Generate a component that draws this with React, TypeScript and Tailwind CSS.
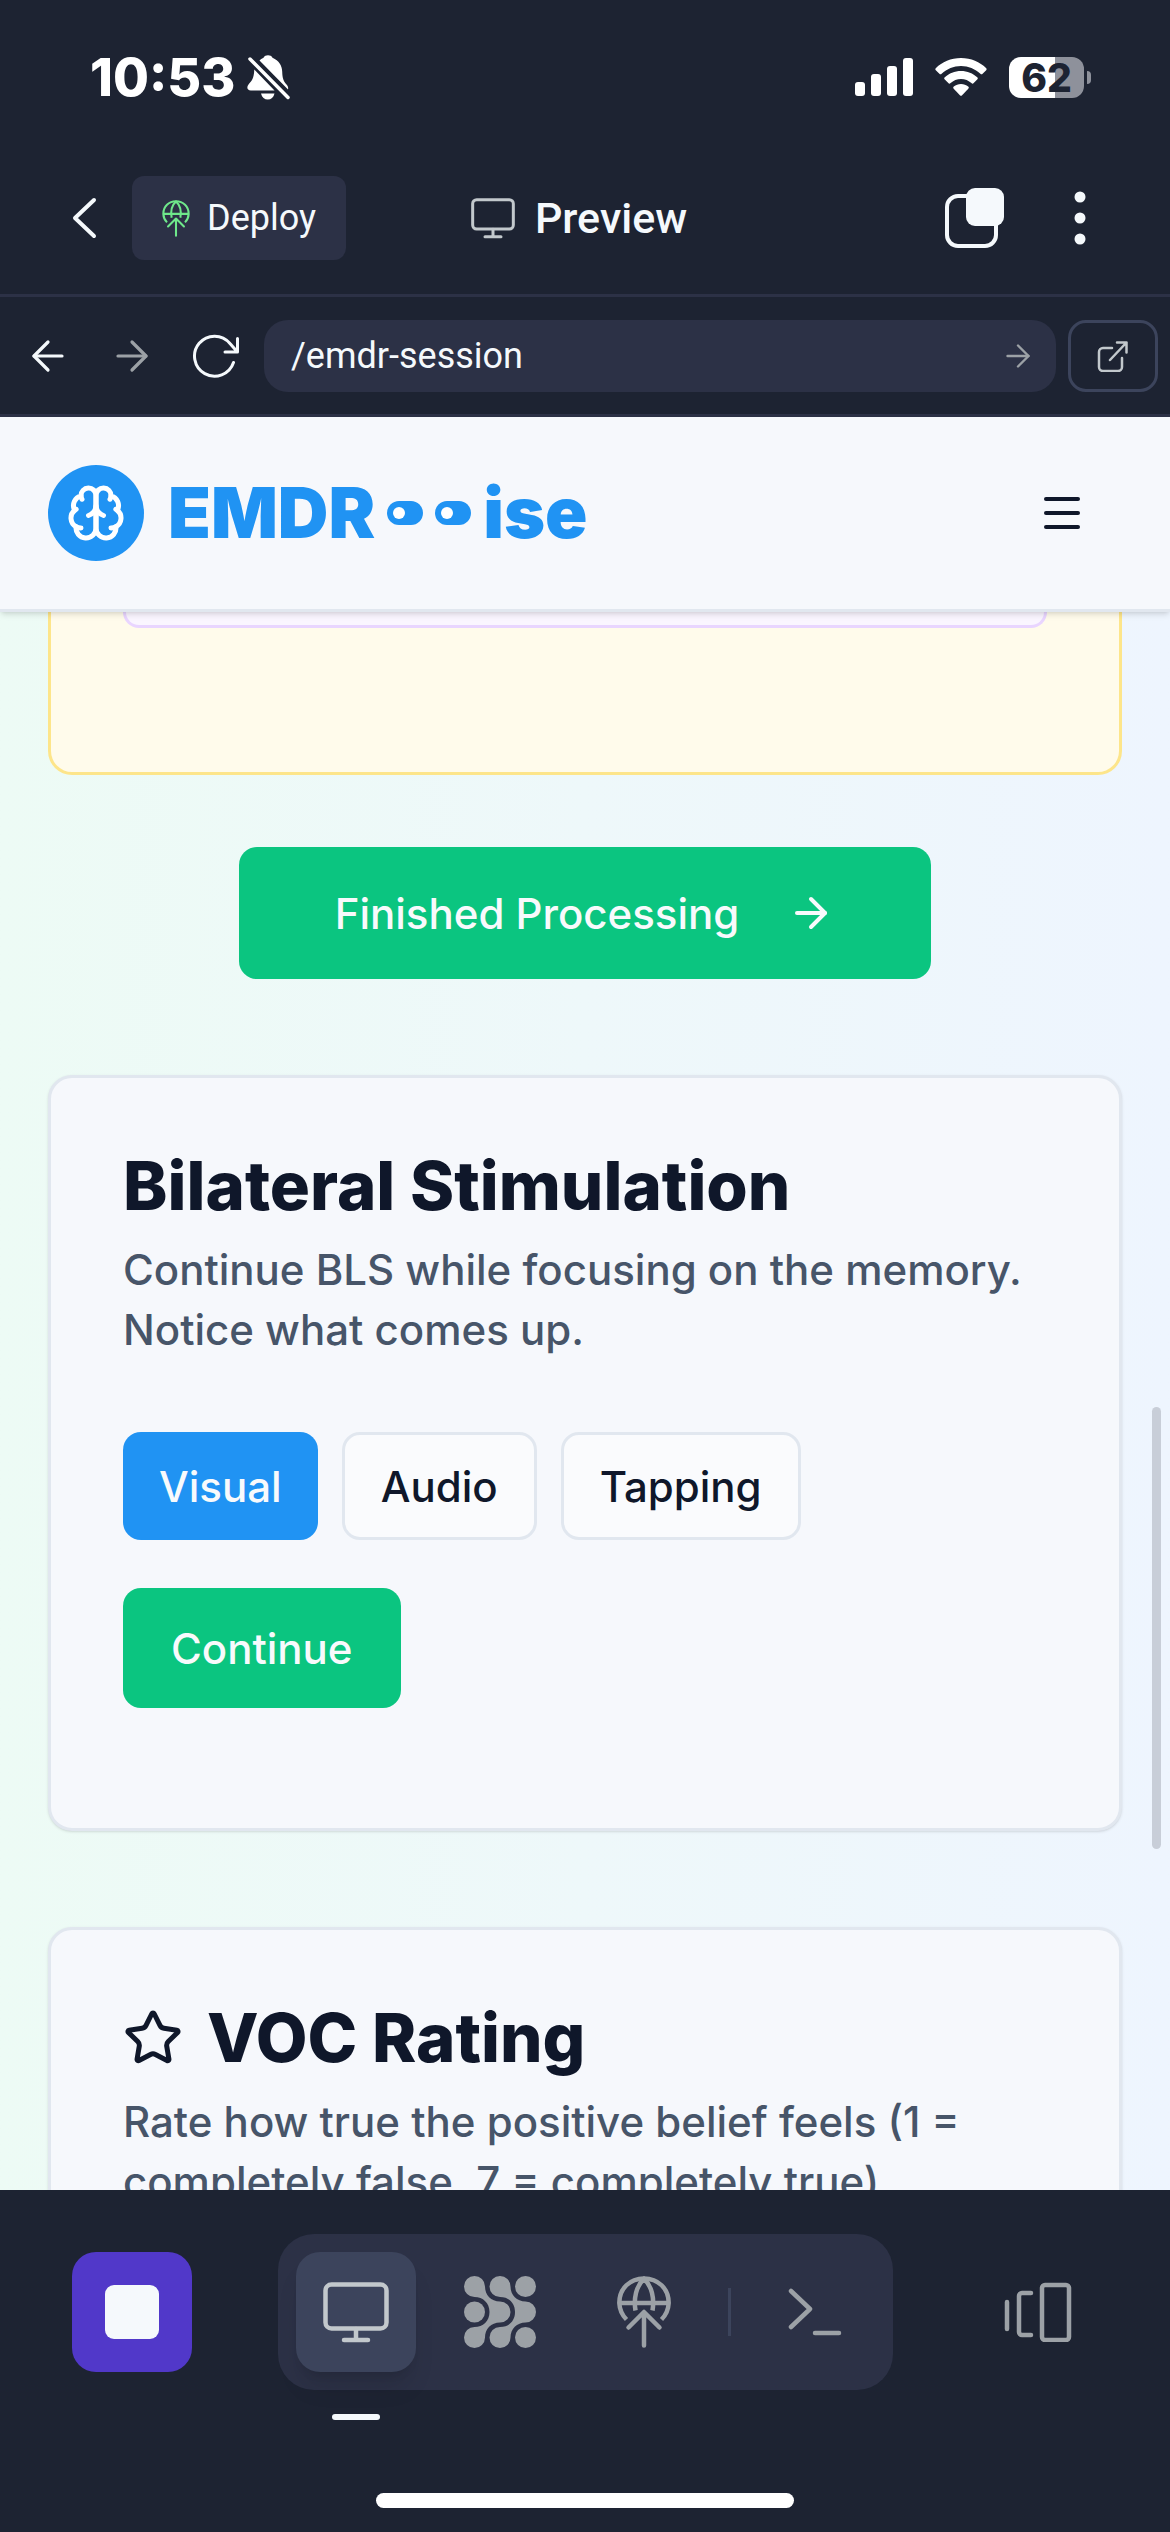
import React from "react";
import { ArrowRight, ArrowLeft, Menu, Star } from "lucide-react";

const StatusBar = () => (
  <div className="flex h-[150px] shrink-0 items-start justify-between pt-12 pr-[79px] pl-[90px] text-white">
    <div className="flex items-center gap-3">
      <span className="text-[52px] leading-[60px] font-extrabold">10:53</span>
      <svg width="44" height="46" viewBox="0 0 44 46" fill="currentColor" aria-label="Silent mode">
        <path d="M12.500 5.500C14 4 15.500 3.400 16.500 2.700 17.500 1 19 .3 21 .3s3.500.7 4.500 2.400C32 5.500 35 10.500 35.200 16.500c.2 7 1.300 9.500 4.300 13 1.500 1.700 2 3.400 1.500 5z" />
        <path d="M7.300 14.500L27.500 35.500H3.800C.3 35.500-.7 32.500 1.500 29.500c3.500-4 5.300-5.500 5.800-15zM14 38.500h13.500c-1 4-3.400 6-6.700 6S15 42.500 14 38.500z" />
        <path d="M3 4L41 42.500" stroke="currentColor" strokeWidth="3.500" strokeLinecap="round" />
      </svg>
    </div>
    <div className="flex h-[58px] items-center">
      <svg width="58" height="38" viewBox="0 0 58 38" fill="currentColor" aria-label="Signal">
        <rect x="0" y="24" width="10" height="14" rx="3" />
        <rect x="16" y="16" width="10" height="22" rx="3" />
        <rect x="32" y="8" width="10" height="30" rx="3" />
        <rect x="48" y="0" width="10" height="38" rx="3" />
      </svg>
      <svg className="ml-[22px]" width="52" height="38" viewBox="0 0 52 38" fill="currentColor" aria-label="Wi-Fi">
        <path d="M26 0C36 0 45 4 51 10c.8.800.8 1.500.2 2.200l-3.600 3.600c-.7.700-1.500.7-2.200 0C40 11 33.500 8 26 8S12 11 6.600 15.800c-.7.700-1.500.7-2.200 0L.8 12.200c-.7-.7-.6-1.400.2-2.200C7 4 16 0 26 0z" />
        <path d="M26 13c6.300 0 12 2.400 16.200 6.300.8.800.8 1.500 0 2.300l-3.500 3.500c-.7.700-1.500.7-2.300 0C33.700 22.600 30 21 26 21s-7.700 1.600-10.400 4.100c-.8.700-1.600.7-2.300 0l-3.500-3.500c-.8-.8-.8-1.500 0-2.300C14 15.400 19.700 13 26 13z" />
        <path d="M26 26c2.700 0 5.200.9 7.200 2.500.8.700.8 1.400.1 2.200l-6.200 6.500c-.7.700-1.500.7-2.200 0l-6.200-6.500c-.7-.8-.7-1.500.1-2.200C20.800 26.900 23.300 26 26 26z" />
      </svg>
      <div className="ml-[22px] flex h-[41px] w-[75px] items-center justify-center rounded-[12px] bg-linear-to-r from-white from-62% to-[#8e919b] to-62% text-[39px] leading-[41px] font-extrabold text-[#1d2332]">62</div>
      <div className="ml-[3px] h-[13px] w-1 rounded-r-full bg-[#8e919b]" />
    </div>
  </div>
);

const GlobeUp = ({ className, strokeWidth }: { className: string; strokeWidth: number }) => (
  <svg className={className} viewBox="0 0 54 72" fill="none" stroke="currentColor" strokeWidth={strokeWidth} strokeLinecap="butt">
    <path d="M9.500 43.500A25 25 0 0 1 2.300 27C2.300 12.500 13 2.400 27 2.400S51.700 12.500 51.700 27a25 25 0 0 1-7.200 16.500" />
    <path d="M3 27h48M18.500 34.500C16.500 23 19 10 27 3c8 7 10.500 20 8.500 31.500" />
    <path d="M11.500 51.500L27 36l15.500 15.500M27 37v32.500" strokeLinecap="round" strokeLinejoin="round" />
  </svg>
);

const Monitor = ({ className }: { className: string }) => (
  <svg className={className} viewBox="0 0 66 62" fill="none" stroke="currentColor" strokeWidth="4.500" strokeLinecap="round">
    <rect x="2.500" y="3.500" width="61" height="44" rx="6" />
    <path d="M33 48v11M21 59h24" />
  </svg>
);

const TitleBar = () => (
  <header className="grid h-[147px] shrink-0 grid-cols-[1fr_auto_1fr] items-center border-b-[3px] border-[#2c3146] pr-[78px] pb-2 pl-[66px] text-[#f5f9fc]">
    <div className="flex items-center gap-[30px]">
      <button aria-label="Back" className="flex w-9 justify-center">
        <svg width="26" height="44" viewBox="0 0 26 44" fill="none" stroke="currentColor" strokeWidth="4" strokeLinecap="round" strokeLinejoin="round">
          <path d="M23 4L4 22l19 18" />
        </svg>
      </button>
      <button className="flex h-[84px] items-center gap-[17px] rounded-[12px] bg-[#2c3146] px-[30px] font-[Roboto] text-[36px]">
        <GlobeUp className="h-[37px] w-7 text-[#6fe88b]" strokeWidth={4} />
        Deploy
      </button>
    </div>
    <h1 className="flex items-center gap-5 font-[Roboto] text-[43px] font-medium">
      <Monitor className="h-[42px] w-11 text-[#c2c8cc]" />
      Preview
    </h1>
    <div className="flex items-center justify-end gap-[63px]">
      <button aria-label="Open tabs">
        <svg width="60" height="60" viewBox="0 0 60 60" fill="none">
          <rect x="2" y="8" width="49" height="50" rx="11" stroke="currentColor" strokeWidth="4" />
          <rect x="21" y="0" width="38" height="38" rx="9" fill="currentColor" />
        </svg>
      </button>
      <button aria-label="More">
        <svg width="24" height="56" viewBox="0 0 24 56" fill="currentColor">
          <circle cx="12" cy="7" r="5.500" />
          <circle cx="12" cy="28" r="5.500" />
          <circle cx="12" cy="49" r="5.500" />
        </svg>
      </button>
    </div>
  </header>
);

const AddressBar = () => (
  <nav className="flex h-[120px] shrink-0 items-center border-b-[3px] border-[#2c3146] pr-3 pl-6 text-[#f5f9fc]">
    <button aria-label="Go back"><ArrowLeft size={48} strokeWidth={1.6} /></button>
    <button aria-label="Go forward" className="ml-9 text-[#9ca1a6]"><ArrowRight size={48} strokeWidth={1.6} /></button>
    <button aria-label="Reload" className="ml-9">
      <svg width="48" height="48" viewBox="0 0 48 48" fill="none" stroke="currentColor" strokeWidth="3" strokeLinecap="round" strokeLinejoin="round">
        <path d="M41.500 30.500A20 20 0 1 1 38 11.500l7 8M45.500 6.500v13.500H33" />
      </svg>
    </button>
    <form className="ml-6 flex h-[72px] min-w-0 flex-1 items-center rounded-[24px] bg-[#2c3146] pr-5 pl-[27px]">
      <input aria-label="Address" defaultValue="/emdr-session" className="min-w-0 flex-1 bg-transparent font-[Roboto] text-[36px] outline-none" />
      <button type="button" aria-label="Go" className="text-[#9ca1a6]"><ArrowRight size={36} strokeWidth={1.600} /></button>
    </form>
    <button aria-label="Open in new window" className="ml-3 flex h-[72px] w-[90px] items-center justify-center rounded-[18px] border-[3px] border-[#3c445c] text-[#c2c8cc]">
      <svg width="32" height="32" viewBox="0 0 32 32" fill="none" stroke="currentColor" strokeWidth="2.500" strokeLinecap="round" strokeLinejoin="round">
        <path d="M15 8H6a4 4 0 0 0-4 4v15a4 4 0 0 0 4 4h15a4 4 0 0 0 4-4V18M13 20L29.500 2.500M20 2.500h9.500v10" />
      </svg>
    </button>
  </nav>
);

const Brain = () => (
  <svg width="60" height="60" viewBox="0 0 24 24" fill="none" stroke="white" strokeWidth="2" strokeLinecap="round" strokeLinejoin="round">
    <path d="M12 5a3 3 0 1 0-5.997.125 4 4 0 0 0-2.526 5.770 4 4 0 0 0 .556 6.588A4 4 0 1 0 12 18Z" />
    <path d="M12 5a3 3 0 1 1 5.997.125 4 4 0 0 1 2.526 5.770 4 4 0 0 1-.556 6.588A4 4 0 1 1 12 18Z" />
    <path d="M15 13a4.500 4.500 0 0 1-3-4 4.500 4.500 0 0 1-3 4" />
    <path d="M17.599 6.500a3 3 0 0 0 .399-1.375M6.003 5.125A3 3 0 0 0 6.401 6.500M3.477 10.896a4 4 0 0 1 .585-.396M19.938 10.500a4 4 0 0 1 .585.396M6 18a4 4 0 0 1-1.967-.516M19.967 17.484A4 4 0 0 1 18 18" />
  </svg>
);

const Eye = () => (
  <span className="flex h-6 w-9 items-center rounded-full bg-[#2093f3] pl-1.5">
    <span className="size-3 rounded-full bg-white" />
  </span>
);

const AppHeader = () => (
  <header className="relative z-10 flex h-[195px] shrink-0 items-center justify-between border-b-[3px] border-[#e1e7ef] bg-[#f6f8fc] pr-[84px] pl-12 shadow-md">
    <a href="#home" className="flex items-center gap-6 text-[#2093f3]">
      <span className="flex size-24 items-center justify-center rounded-full bg-[#2093f3]"><Brain /></span>
      <span className="flex items-center text-[70px] leading-[96px] font-black">
        EMDR
        <span className="mx-3 flex gap-3"><Eye /><Eye /></span>
        ise
      </span>
    </a>
    <button aria-label="Menu" className="text-[#0f172a]"><Menu size={48} /></button>
  </header>
);

const card = "rounded-[24px] border-[3px] border-[#e1e7ef] bg-[#f6f8fc] px-[72px] pt-[72px] shadow-sm";
const title = "text-[67px] leading-[72px] font-extrabold text-[#0f172a]";
const description = "mt-[18px] text-[42px] leading-[60px] font-medium text-[#475569]";
const option = "h-[108px] rounded-[18px] px-9 text-[42px] font-medium";

const Session = () => (
  <main className="relative min-h-0 flex-1 overflow-hidden bg-linear-to-r from-[#edfbf5] via-[#eef8fa] to-[#eef5fe] px-12">
    <div className="h-[163px] rounded-b-[24px] border-[3px] border-t-0 border-[#fde58a] bg-[#fffbeb] px-[72px]">
      <div className="h-4 rounded-b-[18px] border-[3px] border-t-0 border-[#e9d5ff] bg-[#faf5ff]" />
    </div>
    <div className="mt-[72px] flex justify-center">
      <button className="flex h-[132px] items-center gap-12 rounded-[18px] bg-[#0bc580] px-24 text-[42px] font-medium text-[#f8fafc]">
        Finished Processing
        <ArrowRight size={48} />
      </button>
    </div>
    <section className={`${card} mt-24 h-[756px]`}>
      <h2 className={title}>Bilateral Stimulation</h2>
      <p className={description}>Continue BLS while focusing on the memory. Notice what comes up.</p>
      <div className="mt-[72px] flex gap-6">
        <button className={`${option} bg-[#2093f3] text-[#f8fafc]`}>Visual</button>
        <button className={`${option} border-[3px] border-[#e1e7ef] bg-[#fafbfd] text-[#0f172a]`}>Audio</button>
        <button className={`${option} border-[3px] border-[#e1e7ef] bg-[#fafbfd] text-[#0f172a]`}>Tapping</button>
      </div>
      <button className="mt-12 h-[120px] rounded-[18px] bg-[#0bc580] px-12 text-[42px] font-medium text-[#f8fafc]">Continue</button>
    </section>
    <section className={`${card} mt-24 h-[400px]`}>
      <h2 className={`${title} flex items-center gap-6`}>
        <Star size={60} />
        VOC Rating
      </h2>
      <p className={description}>Rate how true the positive belief feels (1 = completely false, 7 = completely true)</p>
    </section>
    <div className="absolute top-[795px] right-[9px] h-[442px] w-[9px] rounded-full bg-[#c8ced8]" />
  </main>
);

const Dots = () => (
  <svg width="72" height="72" viewBox="0 0 72 72" fill="currentColor">
    <path d="M10.500 0A10.500 10.500 0 0 1 21 10.500C21 19 27 25.500 36 25.500a10.500 10.500 0 0 1 0 21C27 46.500 21 53 21 61.500A10.500 10.500 0 1 1 10.500 51C19 51 25.500 45 25.500 36S19 21 10.500 21a10.500 10.500 0 0 1 0-21z" />
    <path d="M36 0a10.500 10.500 0 0 1 10.500 10.500C46.500 19 53 25.500 61.500 25.500a10.500 10.500 0 0 1 0 21C53 46.500 46.500 53 46.500 61.500A10.500 10.500 0 1 1 36 51C45 51 51 45 51 36S45 21 36 21a10.500 10.500 0 0 1 0-21z" />
    <circle cx="10.500" cy="36" r="10.500" />
    <circle cx="61.500" cy="10.500" r="10.500" />
    <circle cx="61.500" cy="61.500" r="10.500" />
  </svg>
);

const tool = "flex size-[120px] items-center justify-center rounded-[24px]";

const BottomBar = () => (
  <footer className="h-[342px] shrink-0 pt-11 text-[#9ca1a6]">
    <div className="flex items-center justify-between px-[72px]">
      <button aria-label="Stop" className={`${tool} bg-[#5138c9]`}>
        <span className="size-[54px] rounded-[9px] bg-[#f5f9fc]" />
      </button>
      <div className="flex h-[156px] items-center rounded-[36px] bg-[#2c3146] px-[18px]">
        <button aria-label="Preview" className={`${tool} relative bg-[#3c445c] text-[#c2c8cc] shadow-xl`}>
          <Monitor className="h-[62px] w-[66px]" />
          <span className="absolute top-[162px] h-1.5 w-12 rounded-full bg-[#f5f9fc]" />
        </button>
        <button aria-label="Agent" className={`${tool} ml-6`}><Dots /></button>
        <button aria-label="Deploy" className={`${tool} ml-6`}><GlobeUp className="h-[72px] w-[54px]" strokeWidth={4.500} /></button>
        <div className="mx-6 h-12 w-[3px] bg-[#3c445c]" />
        <button aria-label="Shell" className={tool}>
          <svg width="54" height="48" viewBox="0 0 54 48" fill="none" stroke="currentColor" strokeWidth="4.500" strokeLinecap="round" strokeLinejoin="round">
            <path d="M3 3l19 18L3 39M27 45h24" />
          </svg>
        </button>
      </div>
      <button aria-label="Switch view" className={tool}>
        <svg width="68" height="60" viewBox="0 0 68 60" fill="none" stroke="currentColor" strokeWidth="4.500" strokeLinecap="round" strokeLinejoin="round">
          <path d="M3 20v27M27 11H18a3 3 0 0 0-3 3v36a3 3 0 0 0 3 3h9" />
          <rect x="38" y="3" width="27" height="55" rx="3" />
        </svg>
      </button>
    </div>
    <div className="mx-auto mt-[103px] h-[15px] w-[418px] rounded-full bg-white" />
  </footer>
);

export default function App() {
  return (
    <div className="flex h-screen flex-col overflow-hidden bg-[#1d2332] font-[Inter,sans-serif]">
      <StatusBar />
      <TitleBar />
      <AddressBar />
      <AppHeader />
      <Session />
      <BottomBar />
    </div>
  );
}
